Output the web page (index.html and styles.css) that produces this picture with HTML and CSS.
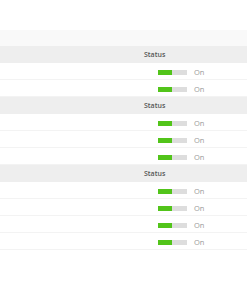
FILE: index.html
```html
<!DOCTYPE html>
<html lang="en">
<head>
    <meta charset="UTF-8">
    <meta name="viewport" content="width=device-width, initial-scale=1.0">
    <title>Status</title>
    <link rel="stylesheet" href="styles.css">
</head>
<body>
    <div class="toolbar"></div>
    <div class="group">
        <div class="row head"><span></span><span class="label">Status</span></div>
        <div class="row"><span></span><span class="status"><span class="bar"><span class="fill"></span></span>On</span></div>
        <div class="row"><span></span><span class="status"><span class="bar"><span class="fill"></span></span>On</span></div>
    </div>
    <div class="group">
        <div class="row head"><span></span><span class="label">Status</span></div>
        <div class="row"><span></span><span class="status"><span class="bar"><span class="fill"></span></span>On</span></div>
        <div class="row"><span></span><span class="status"><span class="bar"><span class="fill"></span></span>On</span></div>
        <div class="row"><span></span><span class="status"><span class="bar"><span class="fill"></span></span>On</span></div>
    </div>
    <div class="group">
        <div class="row head"><span></span><span class="label">Status</span></div>
        <div class="row"><span></span><span class="status"><span class="bar"><span class="fill"></span></span>On</span></div>
        <div class="row"><span></span><span class="status"><span class="bar"><span class="fill"></span></span>On</span></div>
        <div class="row"><span></span><span class="status"><span class="bar"><span class="fill"></span></span>On</span></div>
        <div class="row"><span></span><span class="status"><span class="bar"><span class="fill"></span></span>On</span></div>
    </div>
</body>
</html>
```

FILE: styles.css
```css
body {
    font-family: 'Open Sans', 'Liberation Sans', sans-serif;
    margin: 0;
    padding: 0;
    background: #fff;
    color: #999;
}
.toolbar {
    margin-top: 30px;
    height: 16px;
    background-color: #f9f9f9;
}
.row {
    display: grid;
    grid-template-columns: 144px 1fr;
    align-items: center;
    height: 16px;
    border-bottom: 1px solid #f3f3f3;
    font-size: 7.5px;
}
.row.head {
    height: 17px;
    background-color: #eee;
    border-bottom: none;
    font-size: 7px;
}
.label {
    color: #555;
    font-weight: 600;
}
.status {
    display: flex;
    align-items: center;
    gap: 7px;
    padding-top: 2px;
    padding-left: 14px;
    color: #999;
}
.bar {
    display: block;
    width: 29px;
    height: 5px;
    background-color: #ddd;
}
.fill {
    display: block;
    width: 14px;
    height: 5px;
    background-color: #52c41a;
}
```
